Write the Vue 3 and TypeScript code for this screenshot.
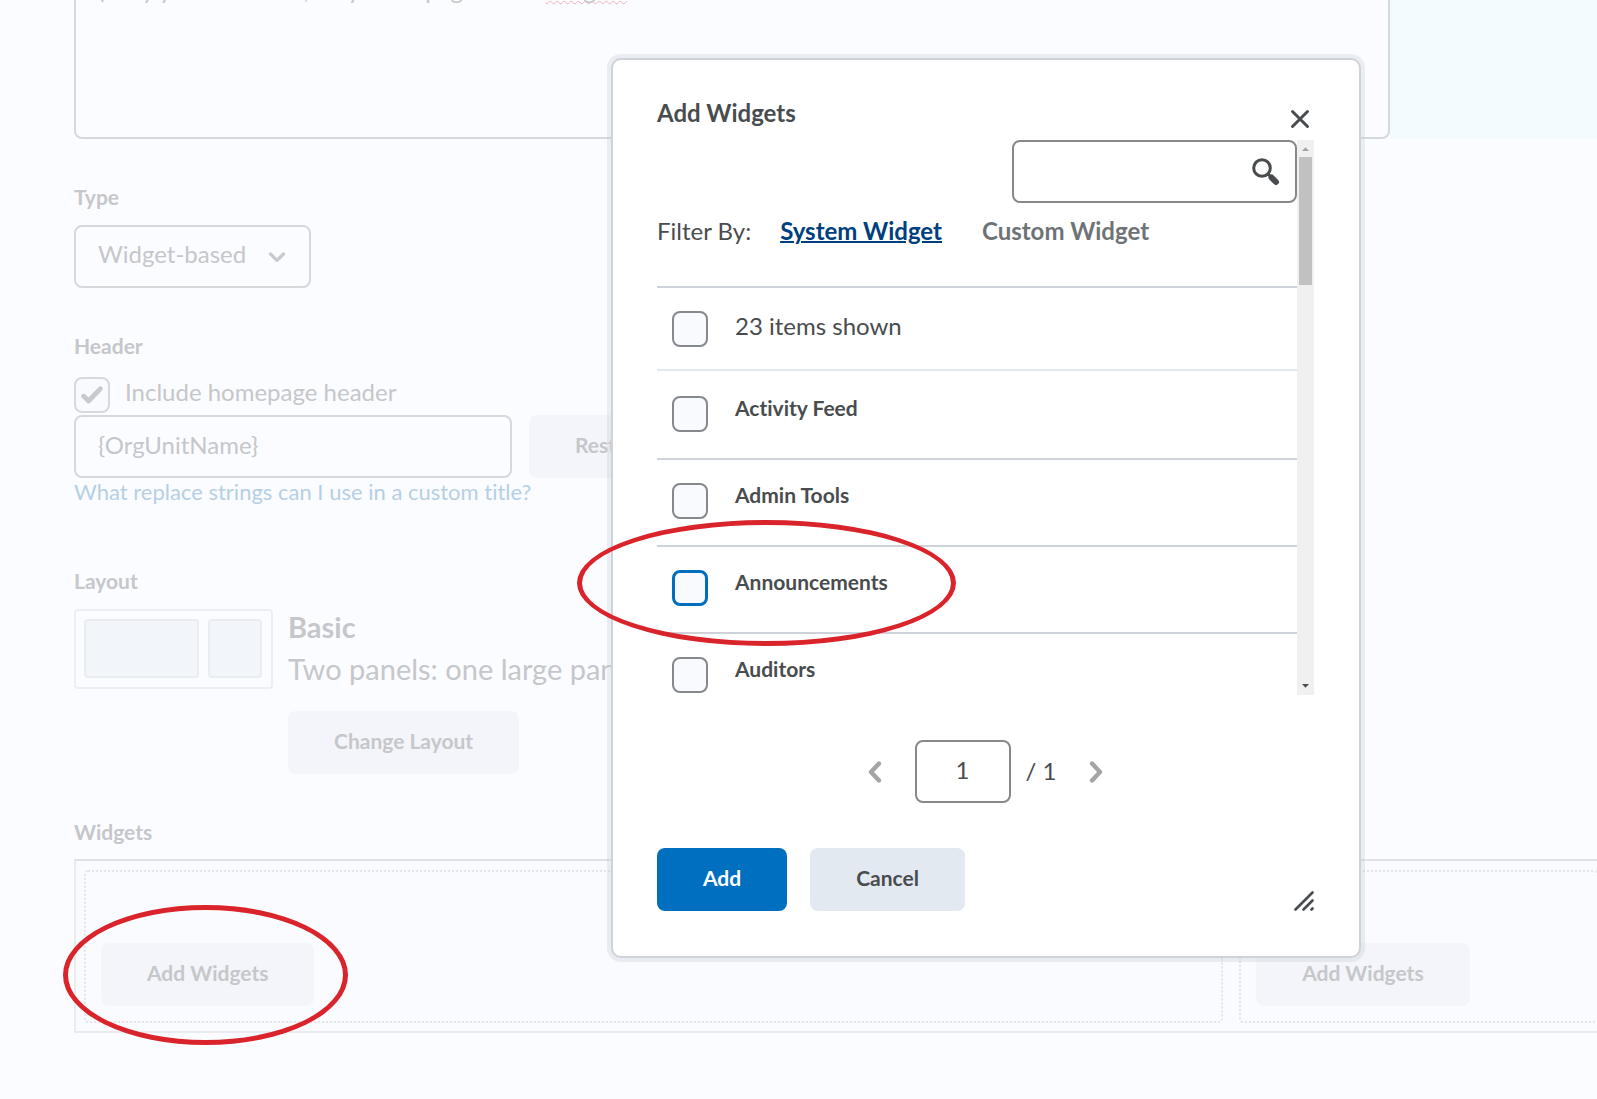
<script setup lang="ts">
import { ref } from 'vue'

interface WidgetItem {
  id: string
  name: string
  focused?: boolean
}

const widgets: WidgetItem[] = [
  { id: 'activity', name: 'Activity Feed' },
  { id: 'admin', name: 'Admin Tools' },
  { id: 'announcements', name: 'Announcements', focused: true },
  { id: 'auditors', name: 'Auditors' },
]

const description = ref('(Only you can see it, only homepage when')
const headerText = ref('{OrgUnitName}')
const includeHeader = ref(true)
const homepageType = ref('Widget-based')
const search = ref('')
const pageNumber = ref('1')
const selected = ref<string[]>([])
const filter = ref<'system' | 'custom'>('system')
</script>

<template>
  <div class="page">
    <main class="form">
      <div class="description-row">
        <div class="description" role="textbox" aria-label="Description">
          <span>{{ description }}</span> <span class="misspelled">widgets</span>
        </div>
        <div class="description-side"></div>
      </div>

      <section class="field type-field">
        <label class="label" for="type">Type</label>
        <div class="select-wrap">
          <select id="type" v-model="homepageType" class="select">
            <option>Widget-based</option>
          </select>
          <svg class="chevron" width="18" height="12" viewBox="0 0 18 12">
            <path d="M2.500 3 9 9.300 15.500 3" fill="none" stroke="#c6c9cd" stroke-width="3.2" stroke-linecap="round" stroke-linejoin="round" />
          </svg>
        </div>
      </section>

      <section class="field header-field">
        <span class="label">Header</span>
        <label class="check-row">
          <input v-model="includeHeader" type="checkbox" class="check faded" />
          <span>Include homepage header</span>
        </label>
        <div class="input-row">
          <input v-model="headerText" class="text-input" aria-label="Custom title" />
          <button class="soft-button">Restore Default</button>
        </div>
        <a class="help" href="#">What replace strings can I use in a custom title?</a>
      </section>

      <section class="field layout-field">
        <span class="label">Layout</span>
        <div class="layout-row">
          <div class="thumb"><i></i><i></i></div>
          <div class="layout-info">
            <strong>Basic</strong>
            <span>Two panels: one large panel</span>
            <button class="soft-button">Change Layout</button>
          </div>
        </div>
      </section>

      <section class="field widgets-field">
        <span class="label">Widgets</span>
        <div class="panels">
          <div class="panel"><button class="soft-button">Add Widgets</button></div>
          <div class="panel last"><button class="soft-button">Add Widgets</button></div>
        </div>
      </section>
    </main>

    <div class="dialog" role="dialog" aria-labelledby="dialog-title">
      <header class="dialog-head">
        <h2 id="dialog-title">Add Widgets</h2>
        <button class="icon-button close" aria-label="Close">
          <svg width="20" height="20" viewBox="0 0 20 20">
            <path d="M2.500 2.500 17.500 17.500M17.500 2.500 2.500 17.500" stroke="#494c4e" stroke-width="3" stroke-linecap="round" />
          </svg>
        </button>
      </header>

      <div class="scroll-area">
        <div class="scroll-content">
          <div class="search">
            <input v-model="search" type="text" aria-label="Search widgets" />
            <button class="icon-button" aria-label="Search">
              <svg width="28" height="28" viewBox="0 0 28 28">
                <circle cx="10" cy="10" r="8.3" fill="none" stroke="#494c4e" stroke-width="3" />
                <path d="M15.500 15.500 18.500 18.500" stroke="#494c4e" stroke-width="3" />
                <path d="M19.500 19.500 24 24" stroke="#494c4e" stroke-width="6" stroke-linecap="round" />
              </svg>
            </button>
          </div>
          <nav class="filters">
            <span>Filter By:</span>
            <a href="#" :class="{ active: filter === 'system' }" @click.prevent="filter = 'system'">System Widget</a>
            <a href="#" :class="{ active: filter === 'custom' }" @click.prevent="filter = 'custom'">Custom Widget</a>
          </nav>
          <label class="item summary">
            <input type="checkbox" class="check" />
            <span>23 items shown</span>
          </label>
          <label v-for="w in widgets" :key="w.id" class="item">
            <input v-model="selected" type="checkbox" class="check" :class="{ focused: w.focused }" :value="w.id" />
            <span>{{ w.name }}</span>
          </label>
        </div>
        <div class="scrollbar" aria-hidden="true">
          <svg width="17" height="17" viewBox="0 0 17 17"><path d="M5 11 8.500 7.200 12 11Z" fill="#a3a3a3" /></svg>
          <div class="thumb-bar"></div>
          <svg width="17" height="17" viewBox="0 0 17 17"><path d="M5 6 8.500 9.800 12 6Z" fill="#494c4e" /></svg>
        </div>
      </div>

      <div class="pager">
        <button class="icon-button" aria-label="Previous page">
          <svg width="14" height="22" viewBox="0 0 14 22">
            <path d="M11 2.500 3 11 11 19.500" fill="none" stroke="#a4a5a7" stroke-width="4.4" stroke-linecap="round" stroke-linejoin="round" />
          </svg>
        </button>
        <input v-model="pageNumber" aria-label="Page number" />
        <span>/ 1</span>
        <button class="icon-button" aria-label="Next page">
          <svg width="14" height="22" viewBox="0 0 14 22">
            <path d="M3 2.500 11 11 3 19.500" fill="none" stroke="#a4a5a7" stroke-width="4.4" stroke-linecap="round" stroke-linejoin="round" />
          </svg>
        </button>
      </div>

      <footer class="dialog-foot">
        <button class="soft-button primary">Add</button>
        <button class="soft-button secondary">Cancel</button>
        <svg class="grip" width="20" height="20" viewBox="0 0 20 20">
          <path d="M1.500 18.500 18.500 1.500M9.500 18.500 18.500 9.500M17.500 18.500 18.500 17.500" stroke="#494c4e" stroke-width="2.6" stroke-linecap="round" />
        </svg>
      </footer>
    </div>

    <div class="mark mark-item"></div>
    <div class="mark mark-button"></div>
  </div>
</template>

<style>
body {
  background: #fbfcff;
}
</style>

<style scoped>
.page {
  position: relative;
  min-height: 100vh;
  overflow: hidden;
  background: #fbfcff;
  color: #c5c7ca;
  font: 24px/36px Lato, sans-serif;
  font-variant-ligatures: none;
}
.page *,
.page *::before {
  box-sizing: border-box;
}
input,
select,
button {
  margin: 0;
  color: inherit;
  font: inherit;
  font-variant-ligatures: none;
}
.form {
  padding-left: 74px;
}
.description-row {
  display: flex;
  height: 139px;
}
.description {
  flex: 1;
  margin-top: -40px;
  padding: 10px 22px;
  overflow: hidden;
  border: 2px solid #d5d8dc;
  border-radius: 8px;
  white-space: nowrap;
}
.misspelled {
  text-decoration: underline wavy #efb3b8 1px;
  text-decoration-skip-ink: none;
}
.description-side {
  width: 207px;
  background: #f4fbff;
}
.field {
  display: flex;
  flex-direction: column;
  align-items: flex-start;
}
.label {
  font-size: 21px;
  font-weight: 700;
  line-height: 30px;
}
.type-field {
  padding-top: 43px;
}
.select-wrap {
  position: relative;
  margin-top: 13px;
}
.select {
  width: 237px;
  height: 63px;
  padding: 0 22px 6px;
  border: 2px solid #d5d8dc;
  border-radius: 8px;
  background: transparent;
  appearance: none;
}
.chevron {
  position: absolute;
  top: 26px;
  right: 25px;
  pointer-events: none;
}
.header-field {
  padding-top: 43px;
}
.check-row {
  display: flex;
  gap: 15px;
  margin-top: 16px;
}
.check-row span {
  line-height: 30px;
}
.check {
  flex: none;
  width: 36px;
  height: 36px;
  border: 2px solid #86898c;
  border-radius: 8px;
  background: #f9fafe;
  appearance: none;
}
.check.faded {
  display: grid;
  place-content: center;
  border-color: #d5d8dc;
}
.check.faded:checked::before {
  width: 22px;
  height: 18px;
  background: #c6c9cd;
  clip-path: path('M0.7 11.5C-0.3 10.3 0 8.900 1 8.200 2.200 7.300 3.600 7.500 4.500 8.500L7.500 11.500 17.500 1.200C18.600 0.100 20.100 0.100 21 1.100 22 2.100 21.900 3.500 21 4.500L9.500 16.500C8.300 17.700 6.800 17.700 5.700 16.500Z');
  content: '';
}
.input-row {
  display: flex;
  gap: 17px;
  margin-top: 2px;
}
.text-input {
  width: 438px;
  height: 63px;
  padding: 0 22px 4px;
  border: 2px solid #d5d8dc;
  border-radius: 8px;
  background: transparent;
}
.soft-button {
  height: 63px;
  padding: 0 46px 4px;
  border: 0;
  border-radius: 8px;
  background: #f3f5fa;
  font-size: 21px;
  font-weight: 700;
  white-space: nowrap;
}
.help {
  color: #b5d0e5;
  font-size: 22px;
  line-height: 28px;
  text-decoration: none;
}
.layout-field {
  padding-top: 60px;
}
.layout-row {
  display: flex;
  gap: 15px;
  margin-top: 13px;
}
.thumb {
  display: grid;
  grid-template-columns: 115px 54px;
  gap: 9px;
  width: 199px;
  height: 80px;
  padding: 8px 8px 9px;
  border: 2px solid #eceef2;
  border-radius: 4px;
}
.thumb i {
  border: 2px solid #e9ecf1;
  border-radius: 4px;
  background: #f2f5fa;
}
.layout-info {
  display: flex;
  flex-direction: column;
  align-items: flex-start;
  font-size: 29px;
  line-height: 42px;
  white-space: nowrap;
}
.layout-info strong {
  margin-top: -3px;
}
.layout-info .soft-button {
  margin-top: 21px;
}
.widgets-field {
  padding-top: 43px;
}
.panels {
  display: grid;
  grid-template-columns: 761fr 239fr;
  gap: 16px;
  align-self: stretch;
  margin-top: 12px;
  padding: 9px 0 8px 8px;
  border: 2px solid #e9ebef;
  border-top-color: #dfe1e5;
  border-right: 0;
  background: #f9fbff;
}
.panel {
  height: 153px;
  padding: 71px 0 0 15px;
  border: 2px dotted #e2e4e8;
  border-radius: 4px;
}
.panel.last {
  border-right: 0;
}

.dialog {
  position: absolute;
  top: 58px;
  right: 236px;
  left: 611px;
  padding: 35px 45px 45px 44px;
  border: 2px solid #cdd3d9;
  border-radius: 10px;
  background: #fff;
  box-shadow: 0 0 0 4px rgba(190, 196, 206, 0.28);
  color: #494c4e;
}
.dialog-head {
  display: flex;
  justify-content: space-between;
  height: 45px;
}
.dialog-head h2 {
  margin: 0;
  font-size: 24px;
  line-height: 36px;
}
.icon-button {
  display: grid;
  place-items: center;
  padding: 0;
  border: 0;
  background: none;
}
.close {
  width: 28px;
  height: 48px;
}
.scroll-area {
  display: flex;
  height: 555px;
}
.scroll-content {
  flex: 1;
  overflow: hidden;
}
.search {
  display: flex;
  width: 285px;
  height: 63px;
  margin-left: auto;
  padding-right: 15px;
  border: 2px solid #86898c;
  border-radius: 8px;
}
.search input {
  flex: 1;
  min-width: 0;
  padding: 0 16px;
  border: 0;
  background: none;
}
.filters {
  display: flex;
  height: 83px;
  padding-top: 10px;
}
.filters span {
  margin-right: 29px;
}
.filters a {
  margin-right: 40px;
  color: #6e7376;
  font-weight: 700;
  text-decoration: none;
}
.filters a.active {
  color: #003f7d;
  text-decoration: underline 2px;
}
.item {
  display: flex;
  gap: 27px;
  height: 87px;
  padding: 23px 0 0 15px;
  border-top: 2px solid #cdd3d9;
  font-size: 21px;
  font-weight: 700;
  line-height: 24px;
}
.item.summary {
  height: 83px;
  font-size: 24px;
  font-weight: 400;
  line-height: 30px;
}
.item.summary + .item {
  height: 89px;
  padding-top: 25px;
  border-top-color: #e3e8ec;
}
.check.focused {
  border: 3px solid #006fbf;
}
.scrollbar {
  display: flex;
  flex-direction: column;
  width: 17px;
  background: #f0f0f0;
}
.scrollbar svg:last-child {
  margin-top: auto;
}
.thumb-bar {
  height: 128px;
  margin: 0 2px;
  background: #c1c1c1;
}
.pager {
  display: flex;
  align-items: center;
  justify-content: center;
  margin-top: 45px;
}
.pager input {
  width: 96px;
  height: 63px;
  margin: 0 15px 0 33px;
  padding: 0 0 4px;
  border: 2px solid #86898c;
  border-radius: 8px;
  text-align: center;
}
.pager span {
  margin-right: 33px;
  padding-bottom: 2px;
}
.dialog-foot {
  display: flex;
  gap: 23px;
  margin-top: 45px;
}
.primary {
  background: #006fbf;
  color: #fff;
}
.secondary {
  background: #e3e9f1;
}
.grip {
  align-self: flex-end;
  margin-left: auto;
}
.mark {
  position: absolute;
  border: 5px solid #d9242b;
  border-radius: 50%;
  pointer-events: none;
}
.mark-item {
  top: 520px;
  left: 577px;
  width: 379px;
  height: 126px;
}
.mark-button {
  top: 905px;
  left: 63px;
  width: 285px;
  height: 140px;
}
</style>
